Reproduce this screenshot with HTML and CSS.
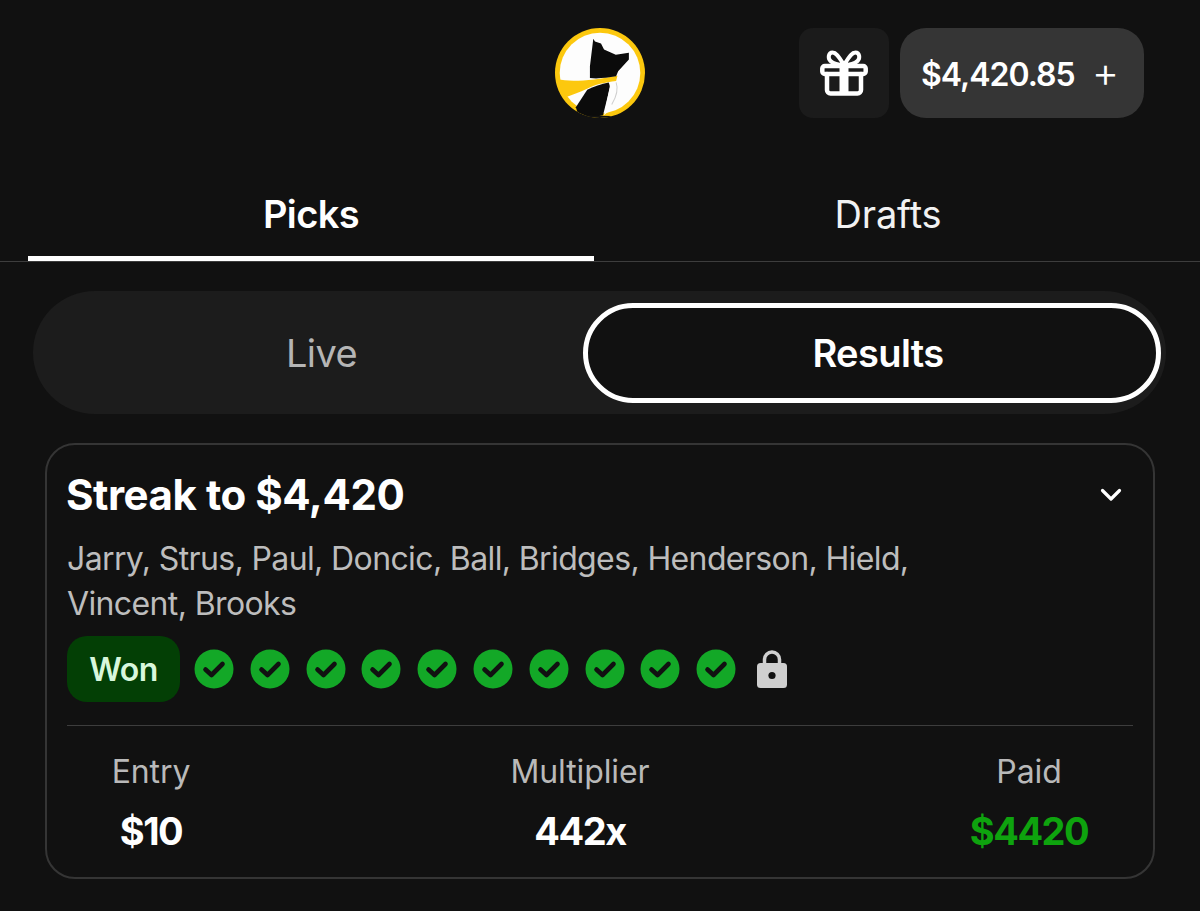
FILE: index.html
```html
<!DOCTYPE html>
<html lang="en">
<head>
<meta charset="utf-8">
<title>Picks</title>
<link rel="stylesheet" href="styles.css">
</head>
<body>
<header class="top">
  <svg class="logo" viewBox="76 56 268 268" width="90" height="90" aria-hidden="true">
    <defs><clipPath id="disc"><circle cx="210" cy="190" r="134"/></clipPath></defs>
    <circle cx="210" cy="190" r="134" fill="#fcc80e"/>
    <circle cx="210" cy="190" r="120" fill="#fdfdfd"/>
    <g clip-path="url(#disc)">
      <path d="M84 208C120 218 190 212 262 198L258 214C225 218 195 224 170 238C150 248 130 254 108 262Z" fill="#fcc80e"/>
      <path d="M190 88L195 96L213 102L222 120L257 136L296 130L296 150L264 185L258 200C230 204 205 208 180 205L180 170Z" fill="#0b0b0b"/>
      <path d="M172 240C190 230 215 222 236 218L240 232L219 316L150 330L138 292Z" fill="#0b0b0b"/>
      <path d="M258 218C266 240 258 262 245 284" fill="none" stroke="#cfcfcf" stroke-width="3"/>
      <path d="M240 226L222 316L240 300Z" fill="#fdfdfd"/>
      <path d="M244 318L262 318L262 340L150 340L140 316Z" fill="#111"/>
    </g>
  </svg>
  <div class="actions">
    <button class="gift" aria-label="Gift">
      <svg viewBox="0 0 48 46" width="48" height="46" fill="none" stroke="#fff" stroke-width="4.500" stroke-linejoin="round" stroke-linecap="round" aria-hidden="true">
        <rect x="2.300" y="16" width="43.400" height="8" rx="2.500"/>
        <path d="M7 24V40A3.500 3.500 0 0 0 10.500 43.500H37.500A3.500 3.500 0 0 0 41 40V24"/>
        <path d="M24 15V44" stroke-width="9" stroke-linecap="butt"/>
        <path d="M24 15C20 9 17 2.500 12.500 2.500C8.500 2.500 7.500 8 10.500 11C13 13.500 18 15 24 15C30 15 35 13.500 37.500 11C40.500 8 39.500 2.500 35.500 2.500C31 2.500 28 9 24 15Z" stroke-width="4"/>
      </svg>
    </button>
    <button class="balance"><span>$4,420.85</span><span class="plus">+</span></button>
  </div>
</header>

<nav class="tabs">
  <a class="tab tab-on">Picks</a>
  <a class="tab">Drafts</a>
</nav>

<div class="segment">
  <div class="seg seg-live">Live</div>
  <div class="seg seg-on">Results</div>
</div>

<section class="card">
  <div class="card-head">
    <h2 class="title">Streak to $4,420</h2>
    <svg class="chev" viewBox="0 0 22 14" width="22" height="14" fill="none" stroke="#fff" stroke-width="3.200" stroke-linecap="round" stroke-linejoin="round" aria-hidden="true"><path d="M2.500 2.500L11 11L19.500 2.500"/></svg>
  </div>
  <p class="names">Jarry, Strus, Paul, Doncic, Ball, Bridges, Henderson, Hield,<br>Vincent, Brooks</p>
  <div class="status">
    <span class="won">Won</span>
    <div class="checks">
      <svg class="check" viewBox="0 0 40 40"><circle cx="20" cy="20" r="19.500" fill="#13a827"/><path d="M11.500 20.500L17.500 26L28.500 15" fill="none" stroke="#111" stroke-width="4.600" stroke-linecap="round" stroke-linejoin="round"/></svg>
      <svg class="check" viewBox="0 0 40 40"><circle cx="20" cy="20" r="19.500" fill="#13a827"/><path d="M11.500 20.500L17.500 26L28.500 15" fill="none" stroke="#111" stroke-width="4.600" stroke-linecap="round" stroke-linejoin="round"/></svg>
      <svg class="check" viewBox="0 0 40 40"><circle cx="20" cy="20" r="19.500" fill="#13a827"/><path d="M11.500 20.500L17.500 26L28.500 15" fill="none" stroke="#111" stroke-width="4.600" stroke-linecap="round" stroke-linejoin="round"/></svg>
      <svg class="check" viewBox="0 0 40 40"><circle cx="20" cy="20" r="19.500" fill="#13a827"/><path d="M11.500 20.500L17.500 26L28.500 15" fill="none" stroke="#111" stroke-width="4.600" stroke-linecap="round" stroke-linejoin="round"/></svg>
      <svg class="check" viewBox="0 0 40 40"><circle cx="20" cy="20" r="19.500" fill="#13a827"/><path d="M11.500 20.500L17.500 26L28.500 15" fill="none" stroke="#111" stroke-width="4.600" stroke-linecap="round" stroke-linejoin="round"/></svg>
      <svg class="check" viewBox="0 0 40 40"><circle cx="20" cy="20" r="19.500" fill="#13a827"/><path d="M11.500 20.500L17.500 26L28.500 15" fill="none" stroke="#111" stroke-width="4.600" stroke-linecap="round" stroke-linejoin="round"/></svg>
      <svg class="check" viewBox="0 0 40 40"><circle cx="20" cy="20" r="19.500" fill="#13a827"/><path d="M11.500 20.500L17.500 26L28.500 15" fill="none" stroke="#111" stroke-width="4.600" stroke-linecap="round" stroke-linejoin="round"/></svg>
      <svg class="check" viewBox="0 0 40 40"><circle cx="20" cy="20" r="19.500" fill="#13a827"/><path d="M11.500 20.500L17.500 26L28.500 15" fill="none" stroke="#111" stroke-width="4.600" stroke-linecap="round" stroke-linejoin="round"/></svg>
      <svg class="check" viewBox="0 0 40 40"><circle cx="20" cy="20" r="19.500" fill="#13a827"/><path d="M11.500 20.500L17.500 26L28.500 15" fill="none" stroke="#111" stroke-width="4.600" stroke-linecap="round" stroke-linejoin="round"/></svg>
      <svg class="check" viewBox="0 0 40 40"><circle cx="20" cy="20" r="19.500" fill="#13a827"/><path d="M11.500 20.500L17.500 26L28.500 15" fill="none" stroke="#111" stroke-width="4.600" stroke-linecap="round" stroke-linejoin="round"/></svg>
      <svg class="lock" viewBox="0 0 32 40" width="32" height="40" aria-hidden="true">
        <path d="M8.500 16V10.500A7.500 7.500 0 0 1 23.500 10.500V16" fill="none" stroke="#cfcfcf" stroke-width="3.500"/>
        <rect x="1" y="14" width="30" height="25" rx="3.500" fill="#cfcfcf"/>
        <circle cx="16" cy="26.500" r="3.600" fill="#111"/>
      </svg>
    </div>
  </div>
  <div class="stats">
    <div class="stat"><span class="label">Entry</span><span class="value">$10</span></div>
    <div class="stat"><span class="label">Multiplier</span><span class="value">442x</span></div>
    <div class="stat"><span class="label">Paid</span><span class="value value-green">$4420</span></div>
  </div>
</section>
</body>
</html>
```
FILE: styles.css
```css
* { box-sizing: border-box; }
html, body { margin: 0; height: 100%; }
body {
  background: #111111;
  color: #fff;
  font-family: Inter, "Liberation Sans", sans-serif;
  overflow: hidden;
}
.top {
  position: relative;
  height: 162px;
  padding: 28px 56px 0 0;
  display: flex;
  justify-content: flex-end;
  align-items: flex-start;
}
.logo {
  position: absolute;
  left: 555px;
  top: 28px;
}
.actions { display: flex; gap: 11px; }
.gift, .balance {
  border: 0;
  height: 90px;
  color: #fff;
  font-family: inherit;
  padding: 0;
  display: flex;
  align-items: center;
}
.gift {
  width: 90px;
  border-radius: 14px;
  background: #1b1b1b;
  justify-content: center;
}
.balance {
  width: 244px;
  border-radius: 26px;
  background: #353535;
  padding: 2px 0 0 21px;
  font-size: 32px;
  font-weight: 600;
  letter-spacing: -1px;
}
.plus {
  margin-left: 17px;
  padding-bottom: 4px;
  font-size: 42px;
  line-height: 40px;
  font-weight: 300;
}
.tabs {
  display: flex;
  height: 100px;
  padding: 0 18px 0 28px;
  border-bottom: 1px solid #3d3d3d;
}
.tab {
  flex: 1;
  display: flex;
  justify-content: center;
  padding-top: 30px;
  font-size: 38px;
  line-height: 44px;
  letter-spacing: -0.2px;
  color: #f2f2f2;
  font-weight: 400;
}
.tab-on {
  flex: 0 0 566px;
  font-weight: 600;
  letter-spacing: -0.6px;
  color: #fff;
  border-bottom: 5px solid #fff;
  height: 99px;
}
.segment {
  margin: 29px 34px 0 33px;
  height: 123px;
  border-radius: 62px;
  background: #1c1c1c;
  display: flex;
  align-items: center;
  padding: 0 5px 0 27px;
}
.seg {
  font-size: 38px;
  letter-spacing: -0.6px;
  display: flex;
  align-items: center;
  justify-content: center;
}
.seg-live {
  flex: 1;
  color: #b5b5b5;
}
.seg-on {
  flex: 0 0 578px;
  height: 100px;
  padding-left: 12px;
  border: 5px solid #fff;
  border-radius: 50px;
  background: #111;
  font-weight: 600;
  color: #fff;
}
.card {
  margin: 29px 45px 0;
  height: 436px;
  border: 2px solid #353535;
  border-radius: 30px;
  padding: 0 20px;
}
.card-head {
  display: flex;
  justify-content: space-between;
  align-items: center;
  padding: 23px 11px 0 0;
  height: 76px;
}
.title {
  margin: 0 0 0 -1px;
  font-size: 42px;
  line-height: 56px;
  font-weight: 700;
  letter-spacing: -0.45px;
}
.names {
  margin: 15px 0 0;
  font-size: 32px;
  line-height: 45px;
  color: #bdbdbd;
  letter-spacing: -0.62px;
}
.status {
  display: flex;
  align-items: center;
  margin-top: 10px;
  height: 66px;
}
.won {
  width: 113px;
  height: 66px;
  border-radius: 20px;
  background: #033f05;
  color: #d8f7dc;
  font-size: 32px;
  font-weight: 600;
  letter-spacing: -0.5px;
  display: flex;
  align-items: center;
  justify-content: center;
}
.checks {
  display: flex;
  align-items: center;
  gap: 15.8px;
  margin-left: 14px;
}
.check { width: 40px; height: 40px; flex: none; }
.lock { margin-left: 4px; }
.stats {
  margin-top: 23px;
  border-top: 1px solid #3d3d3d;
  height: 130px;
  display: grid;
  grid-template-columns: 168px 1fr 208px;
}
.stat {
  display: flex;
  flex-direction: column;
  align-items: center;
  padding-top: 24px;
}
.label {
  font-size: 32px;
  line-height: 44px;
  color: #b9b9b9;
  letter-spacing: -0.1px;
}
.value {
  margin-top: 14px;
  font-size: 38px;
  line-height: 46px;
  font-weight: 700;
  letter-spacing: -1.5px;
}
.value-green { color: #0ea30e; }
```
